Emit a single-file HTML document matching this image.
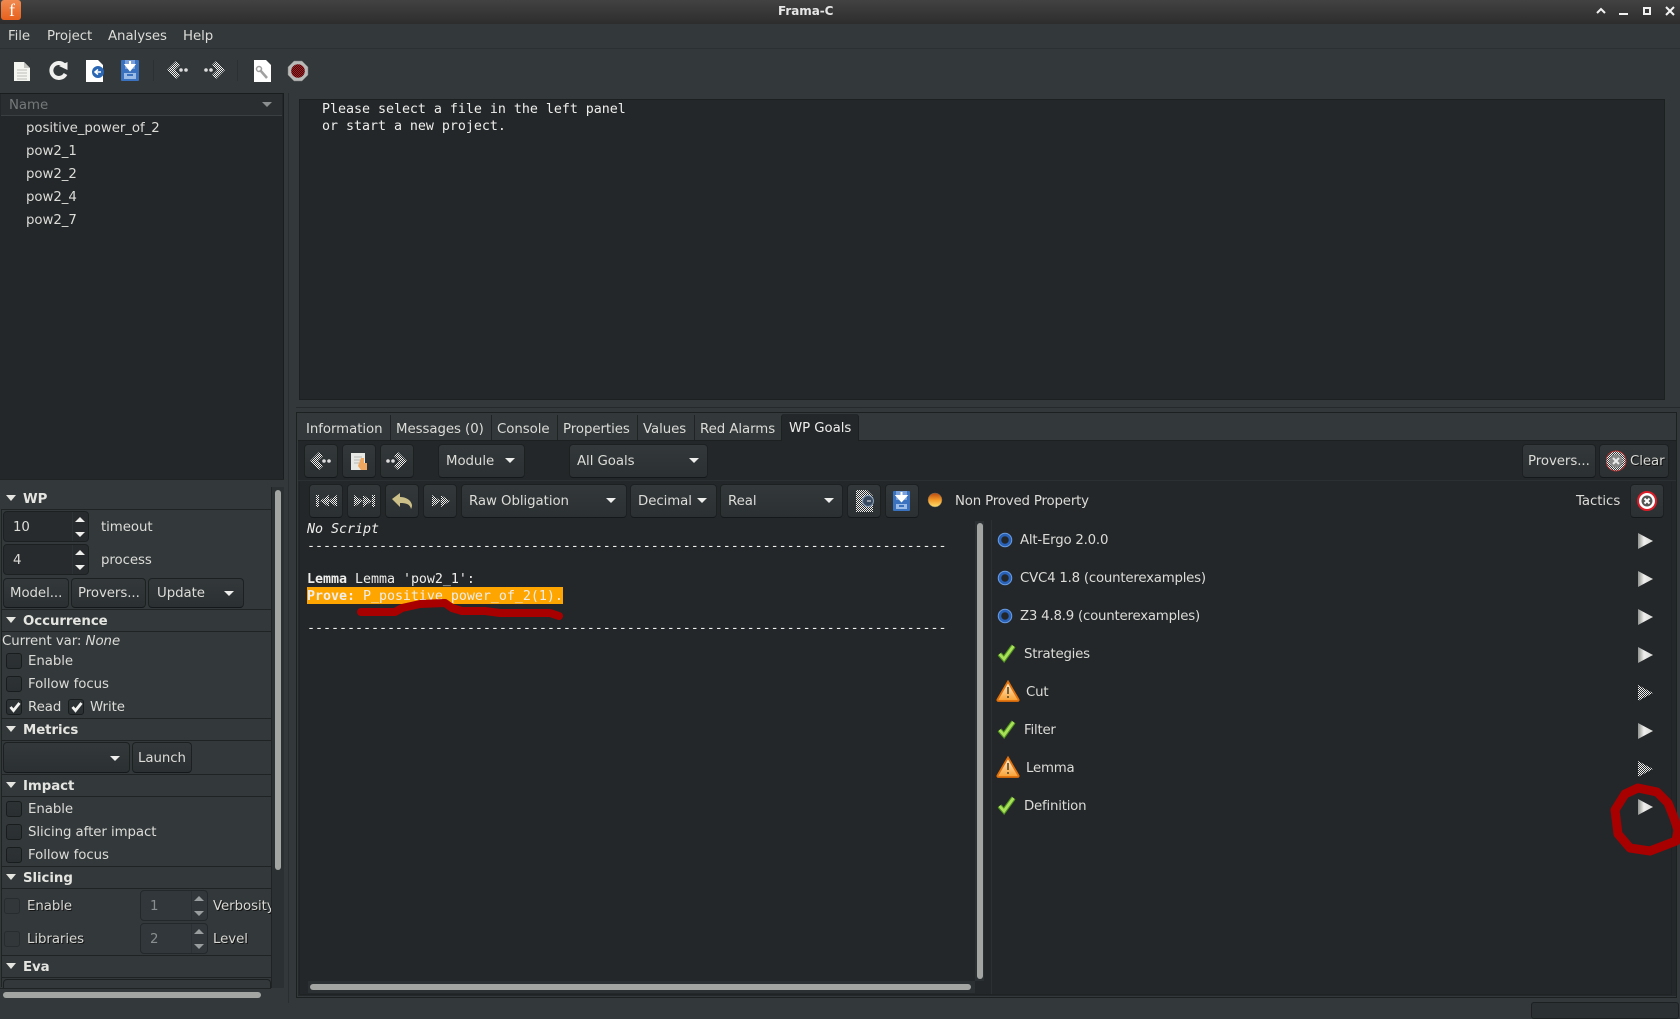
<!DOCTYPE html>
<html><head><meta charset="utf-8"><title>Frama-C</title>
<style>
html,body{margin:0;padding:0;background:#33393b}
#r{position:relative;width:1680px;height:1019px;overflow:hidden;background:#33393b;font-family:"DejaVu Sans","Liberation Sans",sans-serif;font-size:13.33px;letter-spacing:-.06px;color:#dcdcd8}
#r div,#r svg,#r span.a{position:absolute}
.t{white-space:nowrap;line-height:20px;height:20px;margin-top:2px}
.p{letter-spacing:-.22px}
.h{font-weight:bold;color:#e4e4e0}
.m{font-family:"DejaVu Sans Mono","Liberation Mono",monospace;font-size:13.33px;letter-spacing:-.03px;white-space:pre;line-height:17px;height:17px;margin-top:1px;color:#eeeeec}
.d{background:#232729}
.l{background:#1f2324;height:1px}
.v{background:#1f2324;width:1px}
.b{box-sizing:border-box;border:1px solid #1c2021;border-bottom-color:#15181a;border-radius:4px;background:linear-gradient(#33383a,#2b3032)}
.s{box-sizing:border-box;border:1px solid #1c2021;border-radius:4px;background:#2a2f31}
.c{box-sizing:border-box;width:16px;height:16px;border:1px solid #191c1d;border-radius:3px;background:linear-gradient(#2d3235,#2a2f31)}
.th{background:#a2a5a2;border-radius:4px}
.up{width:0;height:0;border:5px solid transparent;border-top:0;border-bottom:5px solid #eeeeec}
.dn{width:0;height:0;border:5px solid transparent;border-bottom:0;border-top:5px solid #eeeeec}
.ex{width:0;height:0;border:5px solid transparent;border-bottom:0;border-top:6px solid #e4e4e0}
</style></head><body><div id="r">
<svg width="0" height="0" style="left:0;top:0"><defs>
<pattern id="dt" width="2" height="2" patternUnits="userSpaceOnUse"><rect width="2" height="2" fill="#33393b"/><rect width="1" height="1" fill="#f0f0ee"/><rect x="1" y="1" width="1" height="1" fill="#f0f0ee"/></pattern>
<pattern id="dd" width="2" height="2" patternUnits="userSpaceOnUse"><rect width="2" height="2" fill="#23272a"/><rect width="1" height="1" fill="#f0f0ee"/><rect x="1" y="1" width="1" height="1" fill="#f0f0ee"/></pattern>
<pattern id="dr" width="2" height="2" patternUnits="userSpaceOnUse"><rect width="2" height="2" fill="#3a0c0c"/><rect width="1" height="1" fill="#b01c24"/><rect x="1" y="1" width="1" height="1" fill="#b01c24"/></pattern>
<linearGradient id="pl" x1="0" x2="1" y1="0" y2="0"><stop offset="0" stop-color="#8f938f"/><stop offset=".4" stop-color="#f0f0ee"/><stop offset="1" stop-color="#d8d9d6"/></linearGradient>
<linearGradient id="bg" x1="0" x2="0" y1="0" y2="1"><stop offset="0" stop-color="#b84810"/><stop offset=".5" stop-color="#f49a28"/><stop offset="1" stop-color="#ffe070"/></linearGradient>
<linearGradient id="wr" x1="0" x2="0" y1="0" y2="1"><stop offset="0" stop-color="#fff0d8"/><stop offset="1" stop-color="#f9a030"/></linearGradient>
</defs></svg>

<!-- title bar -->
<div style="left:0;top:0;width:1680px;height:24px;background:linear-gradient(#424242,#2d2d2d)"></div>
<div style="left:1px;top:0;width:20px;height:20px;border-radius:3px;background:linear-gradient(#f08a50,#e8601c)"></div>
<div class="t" style="left:5px;top:-2px;font-family:'Liberation Serif',serif;font-size:18px;color:#fff;width:14px;text-align:center">f</div>
<div class="t" style="left:778px;top:-1px;font-weight:bold;font-size:12px;color:#e6e6e6">Frama-C</div>
<svg style="left:1590px;top:0" width="90" height="24" fill="none" stroke="#f2f2f2" stroke-width="2"><path d="M7 13l4-4 4 4"/><path d="M29 14h9"/><rect x="54" y="8" width="6" height="6"/><path d="M76 7l8 8M84 7l-8 8"/></svg>

<!-- menu -->
<div style="left:0;top:48px;width:1680px;height:1px;background:#2b3032"></div>
<div class="t" style="left:8px;top:25px">File</div>
<div class="t" style="left:47px;top:25px">Project</div>
<div class="t" style="left:108px;top:25px">Analyses</div>
<div class="t" style="left:183px;top:25px">Help</div>

<!-- main toolbar icons -->
<svg style="left:0;top:52px" width="320" height="36">
<path d="M14 10h10l6 6v13H14z" fill="#f4f4f0"/><path d="M24 10v6h6z" fill="#c4c4c0"/><path d="M17 18h10M17 21h10M17 24h10M17 27h10" stroke="#bcbcb8"/>
<path d="M64 13a7.500 7.500 0 1 0 1.500 9" fill="none" stroke="#f0f0ee" stroke-width="4"/><path d="M59 14l8.500-4v8z" fill="#f0f0ee"/>
<path d="M86 8h12l5 5v17H86z" fill="#fff"/><circle cx="98" cy="20" r="6" fill="#2a66b4"/><path d="M101 20h-5M98 17.500l-3 2.500 3 2.500" stroke="#fff" stroke-width="1.500" fill="none"/>
<rect x="121" y="8" width="18" height="21" rx="1" fill="#3a72c0"/><rect x="125" y="8" width="10" height="9" fill="#7aa0dc"/><path d="M130 9v7M126 13l4 5 4-5z" fill="#fff" stroke="#fff" stroke-width="2"/><rect x="124" y="21" width="12" height="6" fill="#9cbce8"/><rect x="127" y="22" width="6" height="2" fill="#3a72c0"/>
<path d="M167 18l9-9 4 4-5 5 5 5-4 4z" fill="url(#dt)"/><circle cx="181" cy="18" r="1.800" fill="#ddd"/><circle cx="186" cy="18" r="1.800" fill="#ddd"/>
<path d="M225 18l-9-9-4 4 5 5-5 5 4 4z" fill="url(#dt)"/><circle cx="206" cy="18" r="1.800" fill="#ddd"/><circle cx="211" cy="18" r="1.800" fill="#ddd"/>
<path d="M254 8h12l5 5v17h-17z" fill="#fff"/><path d="M260 18l7 8" stroke="#a0a0a0" stroke-width="2.500"/><circle cx="259" cy="17" r="2.500" fill="none" stroke="#a0a0a0" stroke-width="1.500"/>
<path d="M294 9h8l6 6v8l-6 6h-8l-6-6v-8z" fill="#b8bab8" stroke="#777" stroke-width=".5"/><circle cx="298" cy="19" r="6.800" fill="url(#dr)"/>
</svg>
<div class="v" style="left:153px;top:60px;height:21px;background:#2b3032"></div>
<div class="v" style="left:237px;top:60px;height:21px;background:#2b3032"></div>

<!-- function tree -->
<div class="d" style="left:0;top:93px;width:283px;height:386px"></div>
<div style="left:1px;top:94px;width:281px;height:21px;background:#2a2e30;border-bottom:1px solid #3a4042"></div>
<div style="left:283px;top:93px;width:1px;height:386px;background:#1a1d1e"></div>
<div style="left:0;top:93px;width:284px;height:1px;background:#1a1d1e"></div>
<div class="t" style="left:9px;top:94px;color:#75797a">Name</div>
<div class="dn" style="left:262px;top:102px;border-top-color:#8c8f90"></div>
<div class="t" style="left:26px;top:117px">positive_power_of_2</div>
<div class="t" style="left:26px;top:140px">pow2_1</div>
<div class="t" style="left:26px;top:163px">pow2_2</div>
<div class="t" style="left:26px;top:186px">pow2_4</div>
<div class="t" style="left:26px;top:209px">pow2_7</div>
<div class="l" style="left:0;top:479px;width:284px"></div>

<!-- sidebar sections -->
<div class="v" style="left:1px;top:509px;height:478px"></div>
<div class="ex" style="left:6px;top:495px"></div>
<div class="t h" style="left:23px;top:488px">WP</div>
<div class="l" style="left:1px;top:509px;width:270px"></div>
<div class="s d" style="left:3px;top:511px;width:86px;height:31px;background:#272b2d"></div>
<div class="v" style="left:72px;top:512px;height:29px;background:#2d3234"></div>
<div class="t" style="left:13px;top:516px">10</div>
<div class="up" style="left:75px;top:517px"></div><div class="dn" style="left:75px;top:532px"></div>
<div class="t" style="left:101px;top:516px">timeout</div>
<div class="s" style="left:3px;top:544px;width:86px;height:31px;background:#272b2d"></div>
<div class="v" style="left:72px;top:545px;height:29px;background:#2d3234"></div>
<div class="t" style="left:13px;top:549px">4</div>
<div class="up" style="left:75px;top:550px"></div><div class="dn" style="left:75px;top:565px"></div>
<div class="t" style="left:101px;top:549px">process</div>
<div class="b" style="left:3px;top:578px;width:66px;height:30px"></div><div class="t" style="left:10px;top:582px">Model...</div>
<div class="b" style="left:71px;top:578px;width:75px;height:30px"></div><div class="t" style="left:78px;top:582px">Provers...</div>
<div class="b" style="left:148px;top:578px;width:96px;height:30px"></div><div class="t" style="left:157px;top:582px">Update</div><div class="dn" style="left:224px;top:591px"></div>
<div class="l" style="left:1px;top:609px;width:270px"></div>

<div class="ex" style="left:6px;top:617px"></div>
<div class="t h" style="left:23px;top:610px">Occurrence</div>
<div class="l" style="left:1px;top:631px;width:270px"></div>
<div class="t" style="left:2px;top:630px">Current var: <i>None</i></div>
<div class="c" style="left:6px;top:653px"></div><div class="t" style="left:28px;top:650px">Enable</div>
<div class="c" style="left:6px;top:676px"></div><div class="t" style="left:28px;top:673px">Follow focus</div>
<div class="c" style="left:6px;top:699px"></div><div class="t" style="left:28px;top:696px">Read</div>
<svg style="left:9px;top:701px" width="12" height="12"><path d="M1.500 6l3 3.500L10.500 2" fill="none" stroke="#f2f2f0" stroke-width="2.800"/></svg>
<div class="c" style="left:68px;top:699px"></div><div class="t" style="left:90px;top:696px">Write</div>
<svg style="left:71px;top:701px" width="12" height="12"><path d="M1.500 6l3 3.500L10.500 2" fill="none" stroke="#f2f2f0" stroke-width="2.800"/></svg>
<div class="l" style="left:1px;top:718px;width:270px"></div>

<div class="ex" style="left:6px;top:726px"></div>
<div class="t h" style="left:23px;top:719px">Metrics</div>
<div class="l" style="left:1px;top:740px;width:270px"></div>
<div class="b" style="left:3px;top:742px;width:127px;height:31px"></div><div class="dn" style="left:110px;top:756px"></div>
<div class="b" style="left:132px;top:742px;width:60px;height:31px"></div><div class="t" style="left:138px;top:747px">Launch</div>
<div class="l" style="left:1px;top:774px;width:270px"></div>

<div class="ex" style="left:6px;top:782px"></div>
<div class="t h" style="left:23px;top:775px">Impact</div>
<div class="l" style="left:1px;top:796px;width:270px"></div>
<div class="c" style="left:6px;top:801px"></div><div class="t" style="left:28px;top:798px">Enable</div>
<div class="c" style="left:6px;top:824px"></div><div class="t" style="left:28px;top:821px">Slicing after impact</div>
<div class="c" style="left:6px;top:847px"></div><div class="t" style="left:28px;top:844px">Follow focus</div>
<div class="l" style="left:1px;top:866px;width:270px"></div>

<div class="ex" style="left:6px;top:874px"></div>
<div class="t h" style="left:23px;top:867px">Slicing</div>
<div class="l" style="left:1px;top:888px;width:270px"></div>
<div class="c" style="left:4px;top:898px;background:#32383a;border-color:#272c2e"></div>
<div class="t" style="left:28px;top:896px;color:#111;opacity:.9">Enable</div><div class="t" style="left:27px;top:895px;color:#d8d8d4">Enable</div>
<div class="s" style="left:140px;top:890px;width:68px;height:31px;background:#31373a;border-color:#23282a"></div>
<div class="v" style="left:191px;top:891px;height:29px;background:#2b3032"></div>
<div class="t" style="left:150px;top:895px;color:#8a8e8e">1</div>
<div class="up" style="left:194px;top:896px;border-bottom-color:#9a9d9d"></div><div class="dn" style="left:194px;top:911px;border-top-color:#9a9d9d"></div>
<div style="left:213px;top:895px;width:58px;height:24px;overflow:hidden"><div class="t" style="left:1px;top:1px;color:#111">Verbosity</div><div class="t" style="left:0;top:0;color:#d8d8d4">Verbosity</div></div>
<div class="c" style="left:4px;top:931px;background:#32383a;border-color:#272c2e"></div>
<div class="t" style="left:28px;top:929px;color:#111;opacity:.9">Libraries</div><div class="t" style="left:27px;top:928px;color:#d8d8d4">Libraries</div>
<div class="s" style="left:140px;top:923px;width:68px;height:31px;background:#31373a;border-color:#23282a"></div>
<div class="v" style="left:191px;top:924px;height:29px;background:#2b3032"></div>
<div class="t" style="left:150px;top:928px;color:#8a8e8e">2</div>
<div class="up" style="left:194px;top:929px;border-bottom-color:#9a9d9d"></div><div class="dn" style="left:194px;top:944px;border-top-color:#9a9d9d"></div>
<div class="t" style="left:214px;top:929px;color:#111">Level</div><div class="t" style="left:213px;top:928px;color:#d8d8d4">Level</div>
<div class="l" style="left:1px;top:955px;width:270px"></div>

<div class="ex" style="left:6px;top:963px"></div>
<div class="t h" style="left:23px;top:956px">Eva</div>
<div class="l" style="left:1px;top:977px;width:270px"></div>
<div class="s" style="left:3px;top:979px;width:268px;height:20px;background:transparent;border-bottom:0"></div>

<!-- sidebar scrollbars -->
<div style="left:271px;top:487px;width:13px;height:501px;background:#2b3032;border-left:1px solid #1f2324;box-sizing:border-box"></div>
<div class="th" style="left:275px;top:490px;width:6px;height:380px"></div>
<div style="left:0;top:988px;width:271px;height:14px;background:#33393b;border-top:1px solid #1f2324;box-sizing:border-box"></div>
<div class="th" style="left:3px;top:992px;width:258px;height:6px"></div>
<div class="v" style="left:288px;top:93px;height:910px;background:#2a2e30"></div>

<!-- top source panel -->
<div class="d" style="left:299px;top:99px;width:1366px;height:301px;border:1px solid #1c2021;box-sizing:border-box"></div>
<div class="m" style="left:322px;top:100px">Please select a file in the left panel</div>
<div class="m" style="left:322px;top:117px">or start a new project.</div>
<div class="l" style="left:296px;top:407px;width:1384px;background:#25292b"></div>

<!-- notebook -->
<div style="left:296px;top:412px;width:1381px;height:586px;border:1px solid #1c2021;box-sizing:border-box"></div>
<div style="left:298px;top:414px;width:1378px;height:27px;background:#33393b;border-bottom:1px solid #1c2021;box-sizing:border-box"></div>
<div class="v" style="left:390px;top:415px;height:25px"></div>
<div class="v" style="left:491px;top:415px;height:25px"></div>
<div class="v" style="left:557px;top:415px;height:25px"></div>
<div class="v" style="left:637px;top:415px;height:25px"></div>
<div class="v" style="left:694px;top:415px;height:25px"></div>
<div class="d" style="left:781px;top:414px;width:78px;height:27px;border-right:1px solid #1c2021;border-left:1px solid #1c2021;border-radius:3px 3px 0 0;box-sizing:border-box"></div>
<div class="t" style="left:306px;top:418px">Information</div>
<div class="t" style="left:396px;top:418px">Messages (0)</div>
<div class="t" style="left:497px;top:418px">Console</div>
<div class="t" style="left:563px;top:418px">Properties</div>
<div class="t" style="left:643px;top:418px">Values</div>
<div class="t" style="left:700px;top:418px">Red Alarms</div>
<div class="t" style="left:789px;top:417px;color:#eeeeec">WP Goals</div>
<div class="d" style="left:298px;top:441px;width:1378px;height:555px"></div>
<div class="v" style="left:299px;top:482px;height:512px"></div>
<div class="v" style="left:1671px;top:482px;height:512px"></div>
<div class="l" style="left:299px;top:994px;width:1373px"></div>

<!-- goals toolbar 1 -->
<div class="b" style="left:304px;top:444px;width:34px;height:34px"></div>
<div class="b" style="left:342px;top:444px;width:34px;height:34px"></div>
<div class="b" style="left:380px;top:444px;width:34px;height:34px"></div>
<svg style="left:304px;top:444px" width="112" height="34">
<path d="M6 17l9-9 4 4-5 5 5 5-4 4z" fill="url(#dd)"/><circle cx="20" cy="17" r="1.800" fill="#ddd"/><circle cx="25" cy="17" r="1.800" fill="#ddd"/>
<rect x="47" y="9" width="14" height="17" fill="#e8e8e4"/><path d="M50 13h8M50 16h8M50 19h5" stroke="#b8b8b4"/><path d="M57 14h3v5h3v7h-6l-3-4z" fill="#f0a860"/>
<path d="M103 17l-9-9-4 4 5 5-5 5 4 4z" fill="url(#dd)"/><circle cx="84" cy="17" r="1.800" fill="#ddd"/><circle cx="89" cy="17" r="1.800" fill="#ddd"/>
</svg>
<div class="b" style="left:438px;top:444px;width:87px;height:34px"></div><div class="t" style="left:446px;top:450px">Module</div><div class="dn" style="left:505px;top:458px"></div>
<div class="b" style="left:569px;top:444px;width:139px;height:34px"></div><div class="t" style="left:577px;top:450px">All Goals</div><div class="dn" style="left:689px;top:458px"></div>
<div class="b" style="left:1522px;top:444px;width:74px;height:34px"></div><div class="t" style="left:1528px;top:450px">Provers...</div>
<div class="b" style="left:1599px;top:444px;width:70px;height:34px"></div>
<svg style="left:1606px;top:450px" width="22" height="22"><circle cx="10" cy="11" r="10" fill="url(#dt)" stroke="#b03030" stroke-width="1"/><circle cx="10" cy="11" r="6.500" fill="#888"/><path d="M7 8l6 6M13 8l-6 6" stroke="#e8e8e8" stroke-width="2"/></svg>
<div class="t" style="left:1631px;top:451px;color:#111">Clear</div><div class="t" style="left:1630px;top:450px;color:#d8d8d4">Clear</div>
<div class="l" style="left:298px;top:480px;width:1378px;background:#2b3032"></div>

<!-- goals toolbar 2 -->
<div class="b" style="left:309px;top:484px;width:34px;height:34px"></div>
<div class="b" style="left:347px;top:484px;width:34px;height:34px"></div>
<div class="b" style="left:385px;top:484px;width:34px;height:34px"></div>
<div class="b" style="left:423px;top:484px;width:34px;height:34px"></div>
<svg style="left:309px;top:484px" width="150" height="34">
<path d="M7 11h3v12H7zM11 17l9-6v12zM19 17l9-6v12z" fill="url(#dd)"/>
<path d="M45 11l9 6-9 6zM54 11l9 6-9 6zM63 11h3v12h-3z" fill="url(#dd)"/>
<path d="M83 15l8-6v4c6 0 11 3 12 8 0 2-.5 3-1 4-1-5-5-6-11-6v4z" fill="#cdbf88"/>
<path d="M123 11l9 6-9 6zM132 11l9 6-9 6z" fill="url(#dd)"/>
</svg>
<div class="b" style="left:461px;top:484px;width:166px;height:34px"></div><div class="t" style="left:469px;top:490px">Raw Obligation</div><div class="dn" style="left:606px;top:498px"></div>
<div class="b" style="left:630px;top:484px;width:87px;height:34px"></div><div class="t" style="left:638px;top:490px">Decimal</div><div class="dn" style="left:697px;top:498px"></div>
<div class="b" style="left:720px;top:484px;width:123px;height:34px"></div><div class="t" style="left:728px;top:490px">Real</div><div class="dn" style="left:824px;top:498px"></div>
<div class="b" style="left:847px;top:484px;width:34px;height:34px"></div>
<div class="b" style="left:885px;top:484px;width:34px;height:34px"></div>
<svg style="left:847px;top:484px" width="110" height="34">
<path d="M9 6h11l6 6v16H9z" fill="url(#dd)"/><circle cx="21" cy="17" r="5.500" fill="#3a4c62" stroke="#8aa0b8"/><path d="M24 17h-4" stroke="#eee"/>
<rect x="46" y="7" width="17" height="20" rx="1" fill="#3a72c0"/><rect x="49" y="7" width="11" height="9" fill="#7aa0dc"/><path d="M54.500 8v6M50 12l4.500 5 4.500-5z" fill="#fff" stroke="#fff" stroke-width="2"/><rect x="49" y="20" width="11" height="5" fill="#9cbce8"/><rect x="52" y="21" width="5" height="2" fill="#3a72c0"/>
<circle cx="88" cy="16" r="7" fill="url(#bg)" stroke="#6a6a60" stroke-width=".5"/>
</svg>
<div class="t p" style="left:955px;top:490px;letter-spacing:-.17px">Non Proved Property</div>
<div class="t" style="left:1576px;top:490px">Tactics</div>
<div class="b" style="left:1630px;top:484px;width:34px;height:34px"></div>
<svg style="left:1637px;top:491px" width="20" height="20"><circle cx="10" cy="10" r="9" fill="#fff" stroke="#dc1c28" stroke-width="2"/><circle cx="10" cy="10" r="5.500" fill="#555"/><path d="M7.500 7.500l5 5M12.500 7.500l-5 5" stroke="#fff" stroke-width="2"/></svg>

<!-- script text -->
<div style="left:307px;top:587px;width:256px;height:17px;background:#ffa500"></div>
<div class="m" style="left:307px;top:520px"><i>No Script</i></div>
<div class="m" style="left:307px;top:537px">--------------------------------------------------------------------------------</div>
<div class="m" style="left:307px;top:570px"><b>Lemma</b> Lemma 'pow2_1':</div>
<div class="m" style="left:307px;top:587px"><b>Prove:</b> P_positive_power_of_2(1).</div>
<div class="m" style="left:307px;top:619px">--------------------------------------------------------------------------------</div>

<!-- scrollbars -->
<div style="left:975px;top:521px;width:9px;height:460px;background:#2b3032"></div>
<div class="th" style="left:977px;top:523px;width:6px;height:456px"></div>
<div class="v" style="left:991px;top:520px;height:474px;background:#2b3032"></div>
<div style="left:308px;top:981px;width:667px;height:12px;background:#2b3032"></div>
<div class="th" style="left:310px;top:984px;width:661px;height:6px"></div>

<!-- provers -->
<svg style="left:990px;top:520px" width="40" height="300">
<g fill="none"><circle cx="15" cy="20" r="6.500" stroke="#6a9ce0" stroke-width="1.500"/><circle cx="15" cy="20" r="5" stroke="#2a62b8" stroke-width="2.500"/>
<circle cx="15" cy="58" r="6.500" stroke="#6a9ce0" stroke-width="1.500"/><circle cx="15" cy="58" r="5" stroke="#2a62b8" stroke-width="2.500"/>
<circle cx="15" cy="96" r="6.500" stroke="#6a9ce0" stroke-width="1.500"/><circle cx="15" cy="96" r="5" stroke="#2a62b8" stroke-width="2.500"/></g>
<g fill="none" stroke="#4e9020" stroke-width="5"><path d="M9.500 134l4.500 5 9.500-13"/><path d="M9.500 210l4.500 5 9.500-13"/><path d="M9.500 286l4.500 5 9.500-13"/></g>
<g fill="none" stroke="#a8e058" stroke-width="2.800"><path d="M9.500 134l4.500 5 9.500-13"/><path d="M9.500 210l4.500 5 9.500-13"/><path d="M9.500 286l4.500 5 9.500-13"/></g>
<g><path d="M18 161.500l10.500 18a1 1 0 0 1-1 1.500H8.500a1 1 0 0 1-1-1.500z" fill="url(#wr)" stroke="#e0700c" stroke-width="1.800"/><path d="M18 167v7M18 176v2" stroke="#665533" stroke-width="1.800"/></g>
<g transform="translate(0 76)"><path d="M18 161.500l10.500 18a1 1 0 0 1-1 1.500H8.500a1 1 0 0 1-1-1.500z" fill="url(#wr)" stroke="#e0700c" stroke-width="1.800"/><path d="M18 167v7M18 176v2" stroke="#665533" stroke-width="1.800"/></g>
</svg>
<div class="t p" style="left:1020px;top:529px">Alt-Ergo 2.0.0</div>
<div class="t p" style="left:1020px;top:567px">CVC4 1.8 (counterexamples)</div>
<div class="t p" style="left:1020px;top:605px">Z3 4.8.9 (counterexamples)</div>
<div class="t p" style="left:1024px;top:643px">Strategies</div>
<div class="t p" style="left:1026px;top:681px">Cut</div>
<div class="t p" style="left:1024px;top:719px">Filter</div>
<div class="t p" style="left:1026px;top:757px">Lemma</div>
<div class="t p" style="left:1024px;top:795px">Definition</div>
<svg style="left:1630px;top:525px" width="30" height="295">
<path d="M8 8l15 8-15 8z" fill="url(#pl)"/><path d="M8 46l15 8-15 8z" fill="url(#pl)"/><path d="M8 84l15 8-15 8z" fill="url(#pl)"/><path d="M8 122l15 8-15 8z" fill="url(#pl)"/>
<path d="M8 160l15 8-15 8z" fill="url(#dd)"/><path d="M8 198l15 8-15 8z" fill="url(#pl)"/><path d="M8 236l15 8-15 8z" fill="url(#dd)"/><path d="M8 274l15 8-15 8z" fill="url(#pl)"/>
</svg>

<!-- red annotations -->
<svg style="left:0;top:0" width="1680" height="1019" fill="none" stroke="#a80000" stroke-width="9" stroke-linejoin="round" stroke-linecap="round">
<path stroke-width="8" d="M361 612L395 612 402 608 420 604 445 603 452 608 462 611 485 611 500 613 550 613 559 616"/>
<path d="M1638 788L1657 792 1668 803 1674 818 1678 830 1676 841 1650 851 1630 848 1618 834 1615 810 1625 794z"/>
</svg>

<!-- status -->
<div class="s" style="left:1531px;top:1002px;width:148px;height:17px;background:#2b3032;border-radius:3px"></div>
</div></body></html>
